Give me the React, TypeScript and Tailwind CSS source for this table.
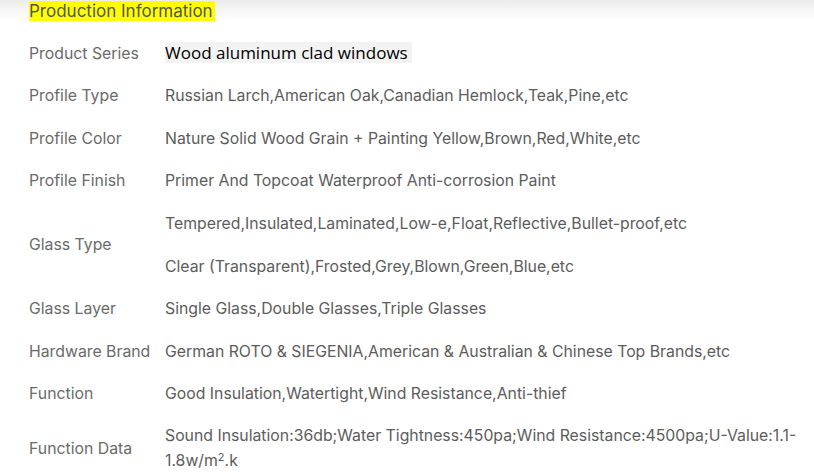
const rows: { label: string; values: string[] }[] = [
  { label: "Profile Type", values: ["Russian Larch,American Oak,Canadian Hemlock,Teak,Pine,etc"] },
  { label: "Profile Color", values: ["Nature Solid Wood Grain + Painting Yellow,Brown,Red,White,etc"] },
  { label: "Profile Finish", values: ["Primer And Topcoat Waterproof Anti-corrosion Paint"] },
  {
    label: "Glass Type",
    values: [
      "Tempered,Insulated,Laminated,Low-e,Float,Reflective,Bullet-proof,etc",
      "Clear (Transparent),Frosted,Grey,Blown,Green,Blue,etc",
    ],
  },
  { label: "Glass Layer", values: ["Single Glass,Double Glasses,Triple Glasses"] },
  { label: "Hardware Brand", values: ["German ROTO & SIEGENIA,American & Australian & Chinese Top Brands,etc"] },
  { label: "Function", values: ["Good Insulation,Watertight,Wind Resistance,Anti-thief"] },
];

export default function App() {
  return (
    <div className="w-[814px] h-[473px] overflow-hidden bg-[linear-gradient(to_bottom,#ececec,#ffffff_20px)] font-['Inter',sans-serif] text-[15.8px] text-[#5c5c5c]">
      <div className="pl-[29px]">
        <span className="inline-block bg-[#ffff00] h-[20px] leading-[20px] pr-[2px] text-[17px] text-[#555]">Production Information</span>
      </div>

      <table className="mt-[9px] ml-[29px] border-collapse">
        <tbody>
          <tr className="h-[42px]">
            <td className="w-[136px] p-0 align-middle text-[#6a6a6a]">Product Series</td>
            <td className="p-0 align-middle">
              <span className="inline-block bg-[#f3f3f3] h-[21px] leading-[21px] pr-[4px] font-['Open_Sans',sans-serif] text-[17px] text-black">
                Wood aluminum clad windows
              </span>
            </td>
          </tr>
          {rows.map((row) =>
            row.values.map((v, i) => (
              <tr key={row.label + i} className="h-[42.6px]">
                {i === 0 && (
                  <td rowSpan={row.values.length} className="p-0 align-middle text-[#6a6a6a] whitespace-nowrap">
                    {row.label}
                  </td>
                )}
                <td className="p-0 align-middle whitespace-nowrap">{v}</td>
              </tr>
            ))
          )}
          <tr className="h-[66px]">
            <td className="p-0 align-middle text-[#6a6a6a]">Function Data</td>
            <td className="p-0 align-middle leading-[25px] whitespace-nowrap">
              Sound Insulation:36db;Water Tightness:450pa;Wind Resistance:4500pa;U-Value:1.1-
              <br />
              1.8w/m<sup className="text-[11px]">2</sup>.k
            </td>
          </tr>
        </tbody>
      </table>
    </div>
  );
}
